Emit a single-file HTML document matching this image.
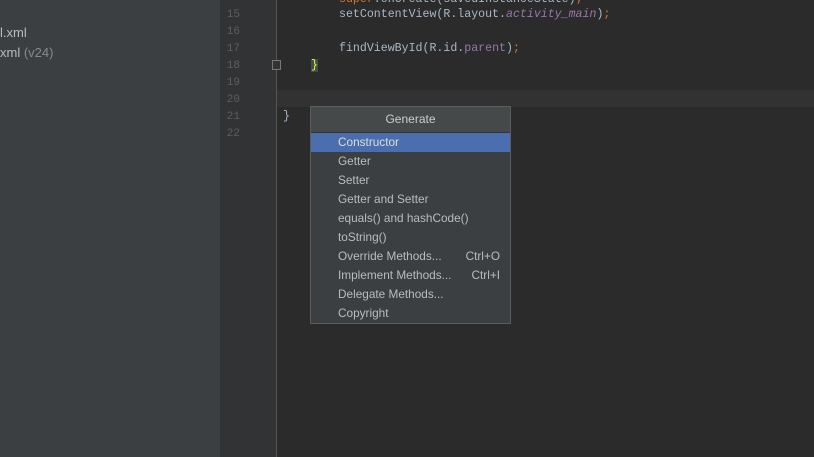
<!DOCTYPE html>
<html><head><style>
body{margin:0;width:814px;height:457px;overflow:hidden;background:#2b2b2b;position:relative;font-family:"Liberation Sans",sans-serif}
.side{position:absolute;left:0;top:0;width:220px;height:457px;background:#3c3f41;color:#bbb;font-size:13px}
.gut{position:absolute;left:220px;top:0;width:56px;height:457px;background:#313335}
.vl{position:absolute;left:276px;top:0;width:1px;height:457px;background:#555}
.ln{position:absolute;left:220px;width:20px;text-align:right;color:#5c5f62;font:11px "Liberation Mono",monospace}
.code{position:absolute;font:11.6px "Liberation Mono",monospace;color:#a9b7c6;white-space:pre}
.cur{position:absolute;left:277px;top:90px;width:537px;height:17px;background:#323232}
.pop{position:absolute;left:310px;top:106px;width:199px;height:216px;background:#3c3f41;border:1px solid #5a5d5f}
.hd{height:25px;background:#45494a;border-bottom:1px solid #333;color:#ccc;font-size:12px;text-align:center;line-height:25px}
.it{height:19px;line-height:19px;padding-left:27px;color:#bbb;font-size:11.8px;position:relative}
.it span{position:absolute;right:10px}
.sel{background:#4b6eaf;color:#ddd}
</style></head><body>
<div class="side">
<div style="position:absolute;left:0;top:25px">l.xml</div>
<div style="position:absolute;left:0;top:45px">xml <span style="color:#888">(v24)</span></div>
</div>
<div class="gut"></div>
<div class="cur"></div>
<div class="vl"></div>
<div class="ln" style="top:-11px">14</div>
<div class="ln" style="top:9px">15</div>
<div class="ln" style="top:26px">16</div>
<div class="ln" style="top:43px">17</div>
<div class="ln" style="top:60px">18</div>
<div class="ln" style="top:77px">19</div>
<div class="ln" style="top:94px">20</div>
<div class="ln" style="top:111px">21</div>
<div class="ln" style="top:128px">22</div>
<div class="code" style="left:339px;top:-7px"><span style="color:#cc7832">super</span>.onCreate(savedInstanceState)<span style="color:#cc7832">;</span></div>
<div class="code" style="left:339px;top:8px">setContentView(R.layout.<i style="color:#9876aa">activity_main</i>)<span style="color:#cc7832">;</span></div>
<div class="code" style="left:339px;top:42px">findViewById(R.id.<span style="color:#9876aa">parent</span>)<span style="color:#cc7832">;</span></div>
<div class="code" style="left:311px;top:59px;background:#3b514d;color:#ffef28">}</div>
<div class="code" style="left:283px;top:110px">}</div>
<div style="position:absolute;left:272px;top:60px;width:7px;height:8px;border:1px solid #777;background:#313335"></div>
<div class="pop">
<div class="hd">Generate</div>
<div class="it sel">Constructor</div>
<div class="it">Getter</div>
<div class="it">Setter</div>
<div class="it">Getter and Setter</div>
<div class="it">equals() and hashCode()</div>
<div class="it">toString()</div>
<div class="it">Override Methods...<span>Ctrl+O</span></div>
<div class="it">Implement Methods...<span>Ctrl+I</span></div>
<div class="it">Delegate Methods...</div>
<div class="it">Copyright</div>
</div>
</body></html>
